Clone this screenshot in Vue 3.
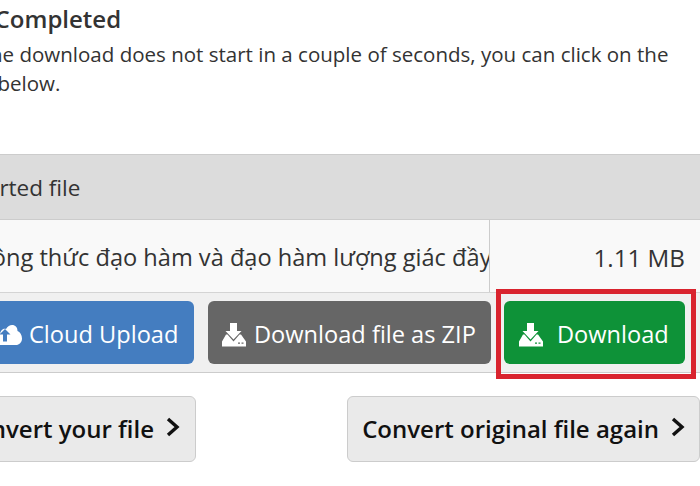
<script setup>
const tray =
  "M0 23.5V18.5L4 11.5H5.5L11.5 18.5L17.5 11.5H19L24 18.5V23.5ZM16 19.4V20.7H18V19.4ZM19.5 19.4V20.7H21.5V19.4Z";
const arrow = "M8 0H15V8H19.5L11.5 16.5L3.5 8H8Z";
</script>

<template>
  <div class="page">
    <h2 class="title">Conversion Completed</h2>
    <p class="note">Once the download does not start in a couple of seconds, you can click on the<br />button below.</p>

    <div class="table">
      <div class="head">Converted file</div>
      <div class="row">
        <div class="name">Công thức đạo hàm và đạo hàm lượng giác đầy đủ nhất</div>
        <div class="size">1.11 MB</div>
      </div>
      <div class="actions">
        <a class="btn blue">
          <svg class="cloud" viewBox="0 0 26 20" width="26" height="20">
            <path fill-rule="evenodd" d="M5 20C2 20 0 18 0 15C0 12 2 10 4 10C4 6 7 3 10 4C11.5 1.5 14 0 16 0C19.5 0 21.5 2.5 21.5 6C24 7 26 10 26 13.5C26 17.5 23 20 20 20ZM9 4L3.5 9.5H7V16.5H11V9.5H14.5Z" />
          </svg>
          Cloud Upload
        </a>
        <a class="btn gray">
          <svg class="dl" viewBox="0 0 24 24" width="24" height="24"><path fill-rule="evenodd" :d="tray" /><path :d="arrow" /></svg>
          Download file as ZIP
        </a>
        <div class="marked">
          <a class="btn green">
            <svg class="dl" viewBox="0 0 24 24" width="24" height="24"><path fill-rule="evenodd" :d="tray" /><path :d="arrow" /></svg>
            Download
          </a>
          <div class="mark"></div>
        </div>
      </div>
    </div>

    <div class="next">
      <a class="more left">Convert your file
        <svg viewBox="0 0 14 20" width="14" height="20"><path d="M2 2L11 10L2 18" /></svg>
      </a>
      <a class="more right">Convert original file again
        <svg viewBox="0 0 14 20" width="14" height="20"><path d="M2 2L11 10L2 18" /></svg>
      </a>
    </div>
  </div>
</template>

<style scoped>
.page {
  width: 900px;
  height: 486px;
  margin-left: -200px;
  font-family: "Open Sans", sans-serif;
  color: #333;
  padding-top: 4px;
  box-sizing: border-box;
}

.title {
  margin: 0 0 0 58px;
  font-size: 24px;
  font-weight: 600;
  line-height: 30px;
}

.note {
  margin: 6px 0 0 127.5px;
  font-size: 20.52px;
  line-height: 29px;
  white-space: nowrap;
  color: #333;
}

.table {
  margin-top: 56px;
  border-top: 1px solid #ccc;
}

.head {
  height: 64px;
  line-height: 66px;
  padding-left: 134px;
  background: #dcdcdc;
  border-bottom: 1px solid #ccc;
  font-size: 22.5px;
}

.row {
  display: flex;
  height: 72px;
  background: #f9f9f9;
  border-bottom: 1px solid #d4d4d4;
  font-size: 23.6px;
  line-height: 75px;
}

.name {
  width: 690px;
  box-sizing: border-box;
  padding-left: 177px;
  white-space: nowrap;
  overflow: hidden;
  border-right: 1px solid #ccc;
}

.size {
  width: 195px;
  text-align: right;
  font-size: 24.2px;
}

.actions {
  display: flex;
  gap: 14px;
  height: 80px;
  padding-top: 8px;
  box-sizing: border-box;
  background: #f0f0f0;
  border-bottom: 1px solid #ccc;
}

.btn {
  display: flex;
  align-items: center;
  height: 63px;
  padding-top: 2px;
  border-radius: 6px;
  color: #fff;
  font-size: 23.6px;
  box-sizing: border-box;
}

.btn svg {
  fill: #fff;
  flex: none;
}

.blue {
  width: 394px;
  padding-left: 196px;
  background: #447dc0;
}

.cloud {
  margin: 3px 7px 0 0;
}

.dl {
  margin-top: 3px;
}

.gray {
  width: 283px;
  padding-left: 14px;
  background: #666;
}

.gray .dl {
  margin-right: 8px;
}

.marked {
  position: relative;
  margin-left: -1px;
}

.green {
  width: 181px;
  padding-left: 15px;
  background: #0e9238;
}

.green .dl {
  margin-right: 14px;
}

.mark {
  position: absolute;
  top: -12px;
  right: -11px;
  bottom: -7px;
  left: -8px;
  border: 5px solid #d9232e;
}

.next {
  display: flex;
  justify-content: space-between;
  margin-top: 23px;
}

.more {
  display: flex;
  align-items: center;
  justify-content: flex-end;
  height: 66px;
  padding-bottom: 1px;
  box-sizing: border-box;
  background: #eaeaea;
  border: 1px solid #ccc;
  border-radius: 6px;
  color: #111;
  font-size: 24px;
  font-weight: 600;
}

.more svg {
  fill: none;
  stroke: #111;
  stroke-width: 3.4;
  margin: -3px 0 0 12px;
}

.left {
  width: 396px;
  padding-right: 15px;
}

.right {
  width: 353px;
  padding-right: 14px;
}
</style>

<style>
html,
body {
  margin: 0;
  overflow: hidden;
  background: #fff;
}
</style>
